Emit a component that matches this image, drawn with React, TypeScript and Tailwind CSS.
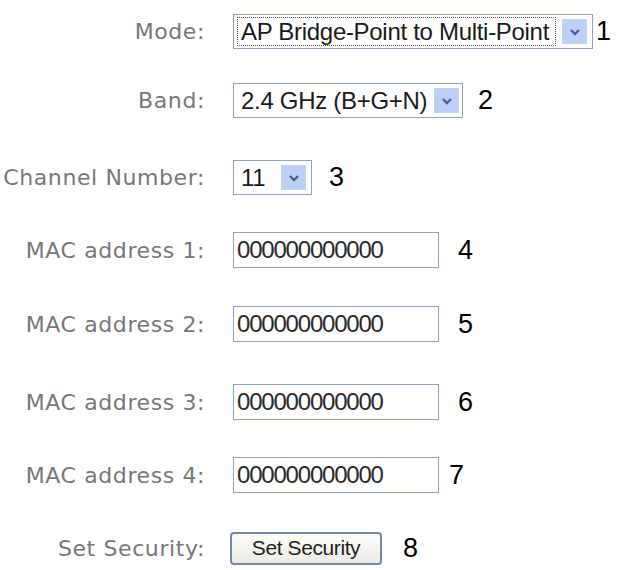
const label = "w-[205px] shrink-0 whitespace-nowrap text-right text-[22px] text-[#777] font-['DejaVu_Sans',sans-serif] tracking-[0.6px]";
const num = "text-[27px] text-black font-['Liberation_Sans',Arial,sans-serif] leading-none";

function Chevron() {
    return (
        <span className="flex h-[25px] w-[25px] shrink-0 items-center justify-center border border-[#c3d3f5] bg-[#bcd0f6]">
            <svg width="12" height="8" viewBox="0 0 12 8">
                <path d="M2 2 L6 6 L10 2" fill="none" stroke="#4a5f8c" strokeWidth="2.4" />
            </svg>
        </span>
    );
}

function Select({ value, width, focused }: { value: string; width: string; focused?: boolean }) {
    return (
        <div className={`flex h-[35px] ${width} items-center justify-between border border-[#8ea3bd] bg-white pl-[3px] pr-[5px]`}>
            <span
                className={`flex h-[29px] items-center whitespace-nowrap pl-[3px] pr-[6px] text-[24px] tracking-[-0.3px] text-[#1a1a1a] ${
                    focused ? "border border-dotted border-[#555]" : "border border-transparent"
                }`}
            >
                {value}
            </span>
            <Chevron />
        </div>
    );
}

function MacInput({ value }: { value: string }) {
    return (
        <div className="flex h-[36px] w-[206px] items-center border border-[#8ea3bd] bg-white pl-[3px] text-[24px] tracking-[-1.2px] text-[#2a2a2a]">
            {value}
        </div>
    );
}

export default function App() {
    return (
        <div className="h-[570px] w-[620px] bg-white font-['Liberation_Sans',Arial,sans-serif] overflow-hidden">
            <div className="flex flex-col pt-[14px]">
                {/* Mode */}
                <div className="flex h-[35px] items-center">
                    <div className={label}>Mode:</div>
                    <div className="ml-[28px]">
                        <Select value="AP Bridge-Point to Multi-Point" width="w-[360px]" focused />
                    </div>
                    <span className={`${num} ml-[3px]`}>1</span>
                </div>

                {/* Band */}
                <div className="mt-[34px] flex h-[35px] items-center">
                    <div className={label}>Band:</div>
                    <div className="ml-[28px]">
                        <Select value="2.4 GHz (B+G+N)" width="w-[230px]" />
                    </div>
                    <span className={`${num} ml-[15px]`}>2</span>
                </div>

                {/* Channel */}
                <div className="mt-[42px] flex h-[35px] items-center">
                    <div className={label}>Channel Number:</div>
                    <div className="ml-[28px]">
                        <Select value="11" width="w-[79px]" />
                    </div>
                    <span className={`${num} ml-[17px]`}>3</span>
                </div>

                {/* MAC addresses */}
                <div className="mt-[37px] flex h-[36px] items-center">
                    <div className={label}>MAC address 1:</div>
                    <div className="ml-[28px]">
                        <MacInput value="000000000000" />
                    </div>
                    <span className={`${num} ml-[19px]`}>4</span>
                </div>
                <div className="mt-[38px] flex h-[36px] items-center">
                    <div className={label}>MAC address 2:</div>
                    <div className="ml-[28px]">
                        <MacInput value="000000000000" />
                    </div>
                    <span className={`${num} ml-[19px]`}>5</span>
                </div>
                <div className="mt-[42px] flex h-[36px] items-center">
                    <div className={label}>MAC address 3:</div>
                    <div className="ml-[28px]">
                        <MacInput value="000000000000" />
                    </div>
                    <span className={`${num} ml-[19px]`}>6</span>
                </div>
                <div className="mt-[37px] flex h-[36px] items-center">
                    <div className={label}>MAC address 4:</div>
                    <div className="ml-[28px]">
                        <MacInput value="000000000000" />
                    </div>
                    <span className={`${num} ml-[10px]`}>7</span>
                </div>

                {/* Set Security */}
                <div className="mt-[38px] flex h-[34px] items-center">
                    <div className={label}>Set Security:</div>
                    <div className="ml-[25px]">
                        <button className="flex h-[33px] w-[152px] items-center justify-center rounded-[4px] border-2 border-[#7488a3] bg-gradient-to-b from-[#fdfdfb] to-[#ecebe4] text-[21px] tracking-[-0.4px] text-[#222]">
                            Set Security
                        </button>
                    </div>
                    <span className={`${num} ml-[21px]`}>8</span>
                </div>
            </div>
        </div>
    );
}
